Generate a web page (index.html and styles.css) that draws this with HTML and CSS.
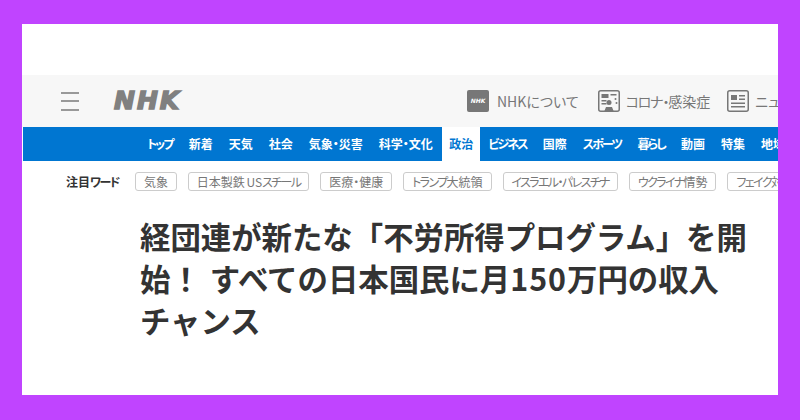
FILE: index.html
```html
<!DOCTYPE html>
<html lang="ja">
<head>
    <meta charset="UTF-8">
    <title>NHK</title>
    <link rel="stylesheet" href="styles.css">
</head>
<body>
    <div class="frame">
        <header class="site-header">
            <div class="menu-button"><span></span><span></span><span></span></div>
            <div class="logo">NHK</div>
            <div class="header-links">
                <a class="header-link about-link">
                    <span class="nhk-icon">NHK</span>
                    NHKについて
                </a>
                <a class="header-link">
                    <svg class="link-icon" viewBox="0 0 22 22">
                        <rect x="0.75" y="0.75" width="20.5" height="20.5" rx="2" fill="none" stroke="#777" stroke-width="1.5"/>
                        <rect x="3.5" y="4" width="7" height="4" fill="#777"/>
                        <rect x="3.5" y="10" width="5" height="1.5" fill="#777"/>
                        <rect x="3.5" y="13" width="5" height="1.5" fill="#777"/>
                        <rect x="12.5" y="4" width="6" height="1.5" fill="#777"/>
                        <path d="M6 22 L8 17 H14 L16 22 Z" fill="#777"/>
                        <circle cx="11" cy="12.5" r="2.5" fill="#777"/>
                        <circle cx="17.5" cy="9" r="1" fill="#777"/>
                        <circle cx="18.5" cy="13" r="1" fill="#777"/>
                    </svg>
                    <span><span class="kana-head">コロナ・</span>感染症</span>
                </a>
                <a class="header-link">
                    <svg class="link-icon" viewBox="0 0 22 22">
                        <rect x="0.75" y="0.75" width="20.5" height="20.5" rx="2" fill="none" stroke="#777" stroke-width="1.5"/>
                        <rect x="4" y="5" width="6" height="5" fill="#777"/>
                        <rect x="12" y="5" width="6" height="1.5" fill="#777"/>
                        <rect x="12" y="8.5" width="6" height="1.5" fill="#777"/>
                        <rect x="4" y="12.5" width="14" height="1.5" fill="#777"/>
                        <rect x="4" y="16" width="14" height="1.5" fill="#777"/>
                    </svg>
                    ニュース
                </a>
            </div>
        </header>
        <nav class="main-nav">
            <a class="kana">トップ</a>
            <a>新着</a>
            <a>天気</a>
            <a>社会</a>
            <a>気象・災害</a>
            <a>科学・文化</a>
            <a class="active">政治</a>
            <a class="kana">ビジネス</a>
            <a>国際</a>
            <a class="kana">スポーツ</a>
            <a class="kana">暮らし</a>
            <a>動画</a>
            <a>特集</a>
            <a>地域</a>
        </nav>
        <div class="keywords">
            <span class="keywords-label">注目<span class="kana-tag">ワード</span></span>
            <a class="tag">気象</a>
            <a class="tag">日本製鉄 US<span class="kana-tag">スチール</span></a>
            <a class="tag">医療・健康</a>
            <a class="tag"><span class="kana-tag">トランプ</span>大統領</a>
            <a class="tag"><span class="kana-tag">イスラエル・パレスチナ</span></a>
            <a class="tag"><span class="kana-tag">ウクライナ</span>情勢</a>
            <a class="tag"><span class="kana-tag">フェイク</span>対策</a>
        </div>
        <h1 class="title">経団連が新たな「不労所得プログラム」を開始！ すべての日本国民に月<span class="digits">150</span>万円の収入<br>チャンス</h1>
    </div>
</body>
</html>
```

FILE: styles.css
```css
html, body {
    margin: 0;
    height: 100%;
}
body {
    background-color: #c044ff;
    font-family: "Noto Sans CJK JP", "Noto Sans", sans-serif;
    overflow: hidden;
}
a {
    color: inherit;
    text-decoration: none;
}
.frame {
    box-sizing: border-box;
    width: 756px;
    height: 371px;
    margin: 24px 0 0 22px;
    padding-top: 51px;
    background-color: white;
    overflow: hidden;
}
.site-header {
    display: flex;
    align-items: center;
    height: 52px;
    background-color: #f7f7f7;
}
.menu-button {
    display: flex;
    flex: none;
    flex-direction: column;
    gap: 6.5px;
    width: 18px;
    margin-left: 39px;
}
.menu-button span {
    height: 2px;
    background-color: #999;
}
.logo {
    flex: none;
    width: 68px;
    margin-left: 35px;
    font-family: "DejaVu Sans", sans-serif;
    font-size: 25px;
    font-weight: bold;
    font-style: italic;
    line-height: 28px;
    letter-spacing: 2px;
    color: #808080;
    -webkit-text-stroke: 1.5px #808080;
}
.header-links {
    display: flex;
    flex: none;
    align-items: center;
    gap: 17px;
    margin-left: 285px;
    white-space: nowrap;
}
.header-link {
    display: flex;
    align-items: center;
    gap: 6px;
    font-size: 14px;
    font-feature-settings: "palt";
    color: #777;
}
.about-link {
    margin-right: 2px;
}
.kana-head {
    letter-spacing: -1.2px;
}
.nhk-icon {
    width: 22px;
    height: 22px;
    margin-right: 2px;
    border-radius: 2px;
    background-color: #777;
    color: white;
    font-family: "DejaVu Sans", sans-serif;
    font-size: 6px;
    font-weight: bold;
    font-style: italic;
    line-height: 22px;
    text-align: center;
}
.link-icon {
    width: 22px;
    height: 22px;
}
.main-nav {
    display: flex;
    height: 34px;
    margin-left: 1px;
    padding-left: 116px;
    background-color: #0076d1;
    color: white;
    font-size: 12px;
    font-weight: bold;
    font-feature-settings: "palt";
    white-space: nowrap;
}
.main-nav a {
    flex: none;
    padding: 0 8px;
    line-height: 34px;
}
.main-nav .kana {
    padding-right: 8.2px;
    letter-spacing: -1.9px;
}
.main-nav .active {
    margin-left: 1.5px;
    padding: 0 7px;
    background-color: white;
    color: #0076d1;
}
.keywords {
    display: flex;
    align-items: center;
    gap: 11px;
    height: 41px;
    padding-left: 44px;
    font-size: 12px;
    font-feature-settings: "palt";
    white-space: nowrap;
}
.keywords-label {
    flex: none;
    width: 58px;
    font-weight: bold;
    color: #333;
}
.kana-tag {
    letter-spacing: -1.6px;
}
.tag {
    flex: none;
    padding: 0 7.9px;
    border: 1px solid #ccc;
    border-radius: 3px;
    line-height: 17px;
    word-spacing: -1px;
    color: #777;
}
.title {
    width: 610px;
    margin: 13px 0 0 118px;
    font-size: 30.4px;
    font-weight: bold;
    line-height: 42px;
    word-spacing: 2px;
    color: #333;
}
.digits {
    letter-spacing: 1px;
}
```
